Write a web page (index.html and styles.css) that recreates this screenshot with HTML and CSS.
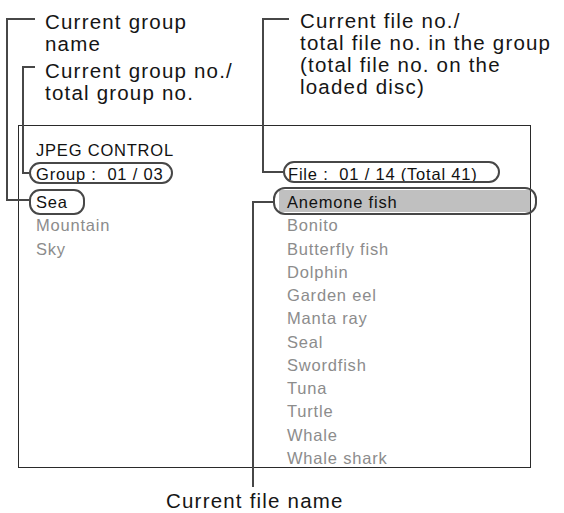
FILE: index.html
```html
<!DOCTYPE html>
<html lang="en">
<head>
<meta charset="utf-8">
<title>JPEG CONTROL</title>
<link rel="stylesheet" href="styles.css">
</head>
<body>
<div class="figure">
  <div class="screen">
    <div class="title">JPEG CONTROL</div>
    <div class="cols">
      <div class="col col-left">
        <div class="status"><span class="callout callout-group">Group :&nbsp; 01 / 03</span></div>
        <ul class="list">
          <li class="item current"><span class="callout callout-sea">Sea</span></li>
          <li class="item">Mountain</li>
          <li class="item">Sky</li>
        </ul>
      </div>
      <div class="col col-right">
        <div class="status"><span class="callout callout-file">File :&nbsp; 01 / 14 (Total 41)</span></div>
        <ul class="list">
          <li class="item current selected">Anemone fish</li>
          <li class="item">Bonito</li>
          <li class="item">Butterfly fish</li>
          <li class="item">Dolphin</li>
          <li class="item">Garden eel</li>
          <li class="item">Manta ray</li>
          <li class="item">Seal</li>
          <li class="item">Swordfish</li>
          <li class="item">Tuna</li>
          <li class="item">Turtle</li>
          <li class="item">Whale</li>
          <li class="item">Whale shark</li>
        </ul>
      </div>
    </div>
  </div>

  <p class="label label-group-name">Current group<br>name</p>
  <p class="label label-group-no">Current group no./<br>total group no.</p>
  <p class="label label-file-no">Current file no./<br>total file no. in the group<br>(total file no. on the<br>loaded disc)</p>
  <p class="label label-file-name">Current file name</p>

  <svg class="leaders" width="564" height="513" viewBox="0 0 564 513" aria-hidden="true">
    <polyline points="35,19 7,19 7,200 29,200"/>
    <polyline points="35,67 23,67 23,173 29,173"/>
    <polyline points="289,19 263,19 263,172 283,172"/>
    <polyline points="273,202 253,202 253,487"/>
  </svg>
</div>
</body>
</html>
```

FILE: styles.css
```css
html, body {
  margin: 0;
  padding: 0;
  background: #ffffff;
}

body {
  font-family: "Liberation Sans", Arial, Helvetica, sans-serif;
  color: #111111;
}

.figure {
  position: relative;
  width: 564px;
  height: 513px;
  overflow: hidden;
  padding-top: 125px;
  box-sizing: border-box;
}

/* On-screen display box */
.screen {
  margin-left: 18px;
  width: 513px;
  height: 343px;
  box-sizing: border-box;
  border: 1px solid #2a2a2a;
  padding-top: 13px;
  font-size: 16.5px;
  letter-spacing: 0.8px;
}

.title {
  line-height: 23px;
  padding-left: 17px;
  color: #111111;
}

.cols {
  display: grid;
  grid-template-columns: 260px 1fr;
  margin-top: 1px;
}

.col-left {
  padding-left: 17px;
}

.status {
  line-height: 23px;
  height: 23px;
  color: #111111;
}

.col-right .status {
  padding-left: 9px;
}

.list {
  list-style: none;
  margin: 5px 0 0;
  padding: 0;
}

.item {
  line-height: 23.27px;
  height: 23.27px;
  color: #8c8c8c;
  white-space: nowrap;
}

.col-right .item {
  padding-left: 8px;
}

.item.current {
  color: #111111;
}

.item.selected {
  position: relative;
  z-index: 0;
}

.item.selected::before {
  content: "";
  position: absolute;
  left: 0;
  right: 0;
  top: -1px;
  height: 22px;
  background: #c0c0c0;
  z-index: -1;
}

/* Annotation outlines around items */
.callout {
  position: relative;
  display: inline-block;
}

.callout::after,
.item.selected::after {
  content: "";
  position: absolute;
  border: 2px solid #474747;
  border-radius: 11px;
  box-sizing: border-box;
}

.callout-group::after {
  left: -7px;
  width: 144px;
  top: -1px;
  bottom: 2px;
}

.callout-file::after {
  left: -5px;
  width: 217px;
  top: -2px;
  bottom: 3px;
}

.callout-sea::after {
  left: -7px;
  width: 56px;
  top: -2px;
  bottom: -1px;
}

.item.selected::after {
  left: -6px;
  right: -7px;
  top: -4px;
  bottom: -1px;
  border-radius: 12px;
}

/* Annotation labels */
.label {
  position: absolute;
  margin: 0;
  font-size: 20.5px;
  line-height: 22px;
  letter-spacing: 1.2px;
  color: #151515;
  white-space: nowrap;
}

.label-group-name {
  left: 45px;
  top: 11px;
}

.label-group-no {
  left: 45px;
  top: 60px;
}

.label-file-no {
  left: 300px;
  top: 10px;
}

.label-file-name {
  left: 166px;
  top: 490px;
}

.leaders {
  position: absolute;
  left: 0;
  top: 0;
  pointer-events: none;
}

.leaders polyline {
  fill: none;
  stroke: #474747;
  stroke-width: 2;
}
```
